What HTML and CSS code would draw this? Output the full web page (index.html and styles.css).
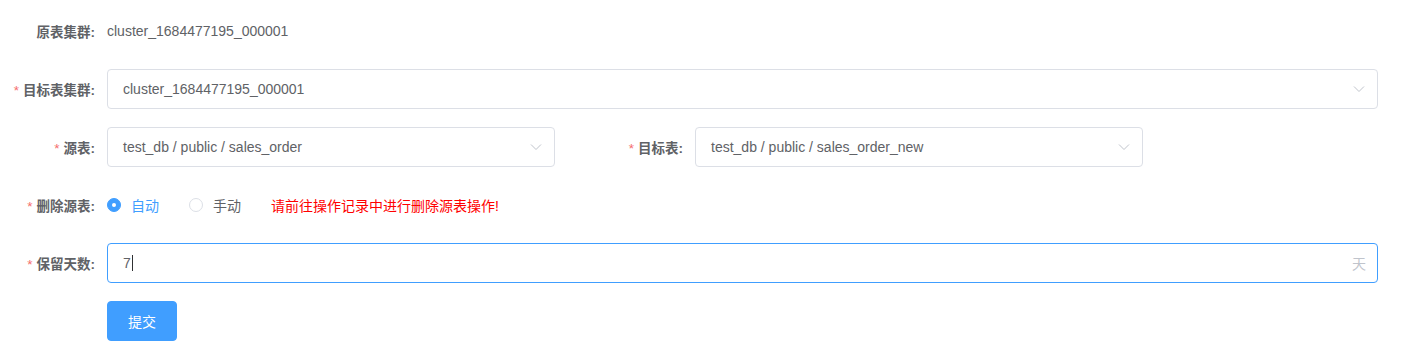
FILE: index.html
```html
<!DOCTYPE html>
<html lang="zh-CN">
<head>
  <meta charset="UTF-8" />
  <title>迁移表</title>
  <link rel="stylesheet" href="styles.css">
</head>
<body>
  <form class="form">
    <div class="form-item">
      <label class="form-label">原表集群:</label>
      <div class="form-content">
        <span class="plain-text">cluster_1684477195_000001</span>
      </div>
    </div>

    <div class="form-item">
      <label class="form-label required">目标表集群:</label>
      <div class="form-content">
        <div class="select wide">
          <span class="select-value">cluster_1684477195_000001</span>
          <svg class="arrow" viewBox="0 0 12 8"><path d="M1 1.5 L6 6.5 L11 1.5" /></svg>
        </div>
      </div>
    </div>

    <div class="form-item split">
      <div class="half">
        <label class="form-label required">源表:</label>
        <div class="select half-select">
          <span class="select-value">test_db / public / sales_order</span>
          <svg class="arrow" viewBox="0 0 12 8"><path d="M1 1.5 L6 6.5 L11 1.5" /></svg>
        </div>
      </div>
      <div class="half second">
        <label class="form-label required">目标表:</label>
        <div class="select half-select">
          <span class="select-value">test_db / public / sales_order_new</span>
          <svg class="arrow" viewBox="0 0 12 8"><path d="M1 1.5 L6 6.5 L11 1.5" /></svg>
        </div>
      </div>
    </div>

    <div class="form-item">
      <label class="form-label required">删除源表:</label>
      <div class="form-content radios">
        <label class="radio checked"><span class="radio-dot"></span>自动</label>
        <label class="radio"><span class="radio-dot"></span>手动</label>
        <span class="warning">请前往操作记录中进行删除源表操作!</span>
      </div>
    </div>

    <div class="form-item">
      <label class="form-label required">保留天数:</label>
      <div class="form-content">
        <div class="input focused">
          <span class="input-value">7<span class="caret"></span></span>
          <span class="suffix">天</span>
        </div>
      </div>
    </div>

    <div class="form-item">
      <div class="form-label"></div>
      <div class="form-content">
        <button type="button" class="btn-primary">提交</button>
      </div>
    </div>
  </form>
</body>
</html>
```

FILE: styles.css
```css
body {
  margin: 0;
  background: #fff;
  font-family: "Liberation Sans", "Noto Sans CJK SC", sans-serif;
  font-size: 14px;
  color: #606266;
}
.form {
  padding: 11px 28px 0 0;
  display: flex;
  flex-direction: column;
  gap: 18px;
}
.form-item {
  display: flex;
  align-items: center;
  height: 40px;
}
.form-label {
  width: 95px;
  padding-right: 12px;
  text-align: right;
  flex-shrink: 0;
  color: #606266;
  font-size: 13.5px;
  font-weight: 600;
}
.form-label.required::before {
  content: "*";
  color: #f56c6c;
  margin-right: 4px;
  font-weight: 400;
}
.form-content {
  flex: 1;
  display: flex;
  align-items: center;
}
.plain-text {
  color: #606266;
}
.select, .input {
  box-sizing: border-box;
  height: 40px;
  border: 1px solid #dcdfe6;
  border-radius: 4px;
  padding: 0 15px;
  display: flex;
  align-items: center;
  justify-content: space-between;
  color: #606266;
}
.select.wide, .input {
  width: 1271px;
}
.half-select {
  width: 448px;
}
.half {
  display: flex;
  align-items: center;
}
.half.second .form-label {
  width: 128px;
}
.arrow {
  width: 12px;
  height: 8px;
  fill: none;
  stroke: #c0c4cc;
  stroke-width: 1;
  margin-right: -3px;
}
.radio {
  display: flex;
  align-items: center;
  margin-right: 30px;
  color: #606266;
}
.radio-dot {
  box-sizing: border-box;
  width: 14px;
  height: 14px;
  border-radius: 50%;
  border: 1px solid #dcdfe6;
  margin-right: 10px;
  position: relative;
}
.radio.checked {
  color: #409eff;
}
.radio.checked .radio-dot {
  border-color: #409eff;
  background: #409eff;
}
.radio.checked .radio-dot::after {
  content: "";
  position: absolute;
  width: 4px;
  height: 4px;
  border-radius: 50%;
  background: #fff;
  left: 4px;
  top: 4px;
}
.warning {
  color: #ff0000;
}
.input.focused {
  border-color: #409eff;
}
.input-value {
  display: flex;
  align-items: center;
}
.caret {
  display: inline-block;
  width: 1px;
  height: 16px;
  background: #303133;
  margin-left: 1px;
}
.suffix {
  color: #c0c4cc;
  margin-right: -4px;
}
.btn-primary {
  height: 40px;
  width: 70px;
  border: 1px solid #409eff;
  background: #409eff;
  color: #fff;
  border-radius: 4px;
  font-family: inherit;
  font-size: 14px;
  padding: 0;
}
```
